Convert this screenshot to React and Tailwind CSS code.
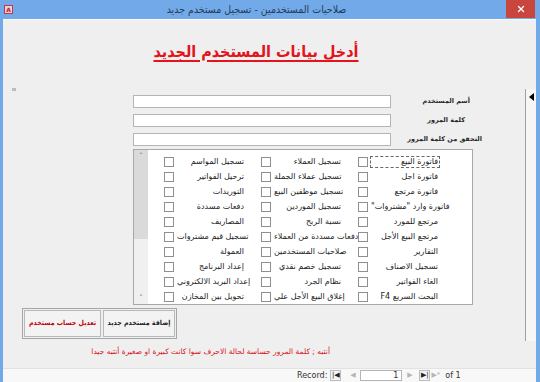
import { X } from 'lucide-react';

const rows = [
  ['فاتورة البيع', 'تسجيل العملاء', 'تسجيل المواسم'],
  ['فاتورة اجل', 'تسجيل عملاء الجملة', 'ترحيل الفواتير'],
  ['فاتورة مرتجع', 'تسجيل موظفين البيع', 'التوريدات'],
  ['فاتورة وارد "مشتروات"', 'تسجيل الموردين', 'دفعات مسددة'],
  ['مرتجع للمورد', 'نسبة الربح', 'المصاريف'],
  ['مرتجع البيع الأجل', 'دفعات مسددة من العملاء', 'تسجيل قيم مشتروات'],
  ['التقارير', 'صلاحيات المستخدمين', 'العمولة'],
  ['تسجيل الاصناف', 'تسجيل خصم نقدي', 'إعداد البرنامج'],
  ['الغاء الفواتير', 'نظام الجرد', 'إعداد البريد الالكتروني'],
  ['البحث السريع F4', 'إغلاق البيع الأجل علي', 'تحويل بين المخازن'],
];

const fields = [
  { label: 'أسم المستخدم', pad: 'pr-[17px]' },
  { label: 'كلمة المرور', pad: 'pr-[22px]' },
  { label: 'التحقق من كلمة المرور', pad: 'pr-[5px]' },
];

const font = "font-['DejaVu_Sans',sans-serif]";
const cond = "font-['DejaVu_Sans_Condensed','DejaVu_Sans',sans-serif]";

const Cell = ({ text, focused }) => (
  <div className="w-[97px] h-[15px] flex items-center" dir="ltr">
    <div className="ml-[8px] w-[10px] h-[10px] border border-[#8f8f8f] bg-white shrink-0" />
    <div
      className={`flex-1 ml-[2px] mr-[7px] h-[12px] flex items-center justify-end pr-[1px] ${
        focused ? 'border border-dashed border-[#666]' : 'border border-transparent'
      }`}
    >
      <span className="text-[8px] leading-[10px] text-[#222] whitespace-nowrap" dir="rtl">
        {text}
      </span>
    </div>
  </div>
);

const NavBtn = ({ children, boxed }) => (
  <div
    className={`h-[11px] w-[11px] flex items-center justify-center text-[7px] leading-none ${
      boxed ? 'border border-[#bdbdbd] bg-[#f4f4f4] text-[#222]' : 'text-[#b5b5b5]'
    }`}
  >
    {children}
  </div>
);

export default function App() {
  return (
    <div className={`w-[540px] h-[382px] bg-[#72a9e8] flex flex-col overflow-hidden ${font}`}>
      {/* title bar */}
      <div className="h-[19px] flex items-center shrink-0">
        <div className="ml-[4px] w-[9px] h-[9px] bg-[#f3d0d4] border border-[#c2384a] flex items-center justify-center">
          <span className="text-[6px] leading-none font-bold text-[#b01e32]">A</span>
        </div>
        <div className="flex-1 flex justify-center pr-[6px]">
          <span className={`text-[10.5px] text-[#243b57] whitespace-nowrap ${cond}`} dir="rtl">
            صلاحيات المستخدمين - تسجيل مستخدم جديد
          </span>
        </div>
        <div className="w-[29px] h-[18px] bg-[#c9463f] mr-[5px] self-start flex items-center justify-center">
          <X size={10} strokeWidth={3} className="text-white" />
        </div>
      </div>

      {/* window body */}
      <div className="flex-1 flex flex-col ml-[3px] mr-[4px] bg-[#efefef] border-t border-[#fbfbfb]">
        <div className="flex-1 flex">
          <div className="w-[522px] flex flex-col">
            <div className="mt-[20px] w-[506px] h-[24px] flex justify-center items-center">
              <span
                className={`text-[16px] leading-[22px] font-bold text-[#e3141b] underline underline-offset-[3px] decoration-[2px] whitespace-nowrap ${cond}`}
                dir="rtl"
              >
                أدخل بيانات المستخدم الجديد
              </span>
            </div>

            <div className="mt-[24px] ml-[9px] w-[4px] h-[3px] bg-[#bdbdbd]" />

            <div className="mt-[4px] flex flex-col gap-[6px]">
              {fields.map((f) => (
                <div key={f.label} className="flex items-center h-[13px]">
                  <div className="ml-[130px] w-[258px] h-[13px] bg-white border border-[#b4b4b4] shrink-0" />
                  <div className={`ml-[4px] w-[92px] flex justify-end shrink-0 ${f.pad}`}>
                    <span className="text-[6.5px] font-bold text-[#2a2a2a] whitespace-nowrap" dir="rtl">
                      {f.label}
                    </span>
                  </div>
                </div>
              ))}
            </div>

            {/* listbox */}
            <div className="mt-[3px] ml-[130px] w-[340px] h-[156px] bg-white border border-[#a8a8a8] flex">
              <div className="w-[14px] flex flex-col bg-[#f0f0f0]">
                <div className="h-[89px] bg-[#dadada] flex justify-center pt-[3px]">
                  <span className="text-[7px] leading-none text-[#555]">˄</span>
                </div>
                <div className="flex-1" />
                <div className="h-[12px] flex justify-center items-center">
                  <span className="text-[7px] leading-none text-[#555]">˅</span>
                </div>
              </div>
              <div className="flex-1 pt-[4px] pr-[25px] flex flex-col">
                {rows.map((r, i) => (
                  <div key={i} className="flex" dir="rtl">
                    {r.map((t, j) => (
                      <Cell key={j} text={t} focused={i === 0 && j === 0} />
                    ))}
                  </div>
                ))}
              </div>
            </div>

            {/* buttons */}
            <div className="mt-[3px] ml-[19px] w-[155px] h-[31px] border border-[#a6a6a6] p-[1px] flex gap-[2px]">
              <div className="w-[77px] border border-[#b8b8b8] bg-[#f3f3f3] flex items-center justify-center">
                <span className={`text-[7px] font-bold text-[#c0000c] whitespace-nowrap ${cond}`} dir="rtl">
                  تعديل حساب مستخدم
                </span>
              </div>
              <div className="flex-1 border border-[#b8b8b8] bg-[#f3f3f3] flex items-center justify-center">
                <span className={`text-[7px] font-bold text-[#222] whitespace-nowrap ${cond}`} dir="rtl">
                  إضافة مستخدم جديد
                </span>
              </div>
            </div>

            <div className="mt-[8px] w-[327px] flex justify-end">
              <span className="text-[7.5px] leading-[10px] text-[#d8101a] whitespace-nowrap" dir="rtl">
                أنتبه ; كلمة المرور حساسة لحالة الاحرف سوا كانت كبيرة او صغيرة أنتبه جيدا
              </span>
            </div>
          </div>

          {/* record selector */}
          <div className="mt-[69px] w-[11px] h-[252px] border-l border-[#a0a0a0] bg-[#f6f6f6] flex justify-center pt-[4px]">
            <div className="w-0 h-0 border-y-[4px] border-y-transparent border-r-[5px] border-r-black" />
          </div>
        </div>

        {/* navigation bar */}
        <div className="h-[14px] bg-[#f8f8f8] border-t border-[#e2e2e2] flex items-center text-[8px] text-[#333] shrink-0">
          <span className="ml-[294px] mr-[3px]">Record:</span>
          <NavBtn boxed>|◀</NavBtn>
          <div className="ml-[6px]"><NavBtn>◀</NavBtn></div>
          <div className="ml-[2px] w-[42px] h-[11px] bg-white border border-[#b5b5b5] text-right pr-[3px] text-[8px] leading-[9px]">1</div>
          <div className="ml-[2px]"><NavBtn>▶</NavBtn></div>
          <div className="ml-[4px]"><NavBtn boxed>▶|</NavBtn></div>
          <NavBtn>▶*</NavBtn>
          <span className="ml-[4px]">of 1</span>
        </div>
      </div>
    </div>
  );
}
